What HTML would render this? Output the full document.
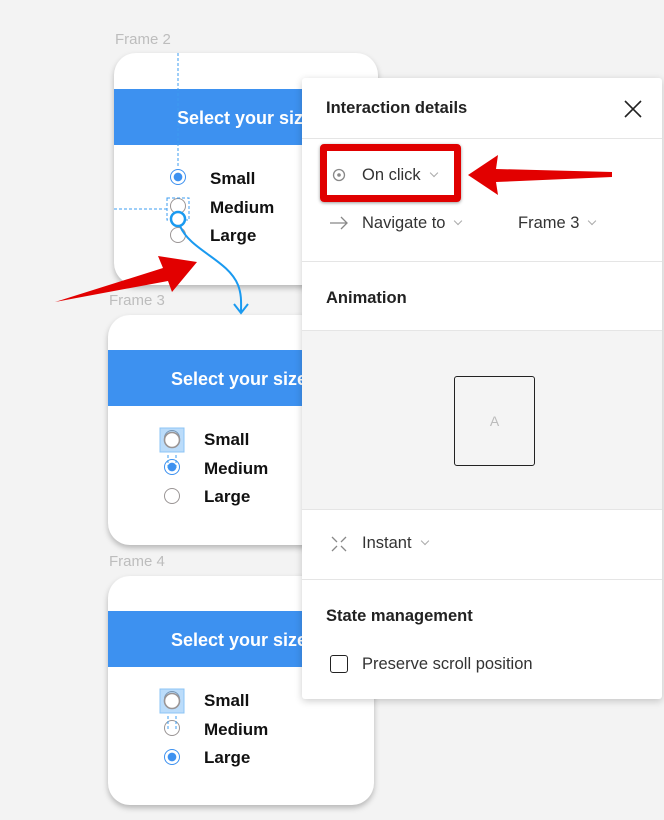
<!DOCTYPE html>
<html><head><meta charset="utf-8"><style>
*{margin:0;padding:0;box-sizing:border-box}
body{width:664px;height:820px;background:#f3f3f3;position:relative;overflow:hidden;font-family:"Liberation Sans",sans-serif}
.lbl{position:absolute;font-size:15px;color:#bdbdbd}
.card{position:absolute;background:#fff;border-radius:22px;box-shadow:0 3px 6px rgba(0,0,0,.25);overflow:hidden}
.hdr{position:absolute;left:0;right:0;height:56px;background:#3d91f0;color:#fff;font-weight:bold;font-size:18px;line-height:58px;padding-left:63px;white-space:nowrap}
.opt{position:absolute;font-weight:bold;font-size:17px;color:#111}
.rad{position:absolute;width:16px;height:16px;border-radius:50%;border:1.6px solid #9a9595;background:#fff}
.rad.on{border-color:#3d91f0;background:radial-gradient(circle at center,#3d91f0 0,#3d91f0 4px,#fff 4.6px)}
.panel{position:absolute;left:302px;top:78px;width:360px;height:621px;background:#fff;border-radius:3px;box-shadow:0 2px 8px rgba(0,0,0,.2)}
.sep{position:absolute;left:0;right:0;height:1px;background:#e5e5e5}
.t{position:absolute;font-size:16.5px;color:#333;white-space:nowrap}
.b{position:absolute;font-size:16.5px;font-weight:bold;color:#222}
.chev{display:inline-block;width:6px;height:6px;border-right:1.3px solid #aaa;border-bottom:1.3px solid #aaa;transform:rotate(45deg);margin-left:10px;position:relative;top:-4px}
</style></head><body>
<div class="lbl" style="left:115px;top:31px">Frame 2</div>
<div class="lbl" style="left:109px;top:292px">Frame 3</div>
<div class="lbl" style="left:109px;top:553px">Frame 4</div>

<div class="card" style="left:114px;top:53px;width:264px;height:232px">
 <div class="hdr" style="top:36px">Select your size</div>
 <div class="rad on" style="left:56px;top:116px"></div><div class="opt" style="left:96px;top:116px">Small</div>
 <div class="rad" style="left:56px;top:145px"></div><div class="opt" style="left:96px;top:145px">Medium</div>
 <div class="rad" style="left:56px;top:174px"></div><div class="opt" style="left:96px;top:173px">Large</div>
</div>
<div class="card" style="left:108px;top:315px;width:264px;height:230px">
 <div class="hdr" style="top:35px">Select your size</div>
 <div class="rad" style="left:56px;top:115px"></div><div class="opt" style="left:96px;top:115px">Small</div>
 <div class="rad on" style="left:56px;top:144px"></div><div class="opt" style="left:96px;top:144px">Medium</div>
 <div class="rad" style="left:56px;top:173px"></div><div class="opt" style="left:96px;top:172px">Large</div>
</div>
<div class="card" style="left:108px;top:576px;width:266px;height:229px">
 <div class="hdr" style="top:35px">Select your size</div>
 <div class="rad" style="left:56px;top:115px"></div><div class="opt" style="left:96px;top:115px">Small</div>
 <div class="rad" style="left:56px;top:144px"></div><div class="opt" style="left:96px;top:144px">Medium</div>
 <div class="rad on" style="left:56px;top:173px"></div><div class="opt" style="left:96px;top:172px">Large</div>
</div>

<svg width="664" height="820" style="position:absolute;left:0;top:0">
 <g stroke="#3d9cf0" stroke-width="1" stroke-dasharray="3,2" fill="none">
  <line x1="178" y1="53" x2="178" y2="168"/>
  <line x1="114" y1="209" x2="168" y2="209"/>
  <rect x="167" y="198" width="22" height="22"/>
  <line x1="168" y1="455" x2="168" y2="470"/><line x1="176" y1="455" x2="176" y2="470"/>
  <line x1="168" y1="716" x2="168" y2="730"/><line x1="176" y1="716" x2="176" y2="730"/>
 </g>
 <rect x="160" y="428" width="24" height="24" fill="rgba(61,156,240,.35)" stroke="#8cc4f5"/>
 <rect x="160" y="689" width="24" height="24" fill="rgba(61,156,240,.35)" stroke="#8cc4f5"/>
 <circle cx="172" cy="440" r="7.5" fill="#fff" stroke="#9a9595" stroke-width="1.6"/>
 <circle cx="172" cy="701" r="7.5" fill="#fff" stroke="#9a9595" stroke-width="1.6"/>
 <circle cx="178" cy="219" r="7" fill="#fff" stroke="#1a9af0" stroke-width="2.5"/>
 <path d="M180 226 C190 250 228 260 238 285 C242 295 241 305 241 312" stroke="#1a9af0" stroke-width="2" fill="none"/>
 <path d="M234 304 L241 313 L248 304" stroke="#1a9af0" stroke-width="2" fill="none"/>
 <path d="M55 302 L163 268 L158 256 L197 262 L172 292 L168 281 Z" fill="#e20000"/>
</svg>

<div class="panel">
 <div class="b" style="left:24px;top:21px">Interaction details</div>
 <svg style="position:absolute;left:322px;top:22px" width="18" height="18"><path d="M1 1L17 17M17 1L1 17" stroke="#222" stroke-width="1.6"/></svg>
 <div class="sep" style="top:60px"></div>
 <svg style="position:absolute;left:30px;top:90px" width="14" height="14"><circle cx="7" cy="7" r="5.5" stroke="#888" stroke-width="1.3" fill="none"/><circle cx="7" cy="7" r="1.8" fill="#888"/></svg>
 <div class="t" style="left:60px;top:88px">On click<span class="chev"></span></div>
 <svg style="position:absolute;left:27px;top:138px" width="20" height="14"><path d="M1 7H18M12 1L18 7L12 13" stroke="#888" stroke-width="1.3" fill="none"/></svg>
 <div class="t" style="left:60px;top:136px">Navigate to<span class="chev"></span></div>
 <div class="t" style="left:216px;top:136px">Frame 3<span class="chev"></span></div>
 <div class="sep" style="top:183px"></div>
 <div class="b" style="left:24px;top:211px">Animation</div>
 <div class="sep" style="top:252px"></div>
 <div style="position:absolute;left:0;right:0;top:253px;height:178px;background:#f4f4f4">
  <div style="position:absolute;left:152px;top:45px;width:81px;height:90px;border:1.3px solid #222;border-radius:3px;text-align:center;line-height:88px;color:#bbb;font-size:14px">A</div>
 </div>
 <div class="sep" style="top:431px"></div>
 <svg style="position:absolute;left:29px;top:458px" width="16" height="16" stroke="#888" stroke-width="1.3"><path d="M1 1L6 6M15 1L10 6M1 15L6 10M15 15L10 10"/></svg>
 <div class="t" style="left:60px;top:456px">Instant<span class="chev"></span></div>
 <div class="sep" style="top:501px"></div>
 <div class="b" style="left:24px;top:529px">State management</div>
 <div style="position:absolute;left:28px;top:577px;width:18px;height:18px;border:1.4px solid #222;border-radius:3px"></div>
 <div class="t" style="left:60px;top:577px">Preserve scroll position</div>
</div>

<div style="position:absolute;left:320px;top:144px;width:141px;height:58px;border:7px solid #e00000;border-radius:4px;box-shadow:0 1px 3px rgba(0,0,0,.4)"></div>
<svg width="664" height="820" style="position:absolute;left:0;top:0">
 <path d="M468 175 L498 155 L496 169 L612 172 L612 177 L496 182 L498 195 Z" fill="#e20000"/>
</svg>
</body></html>
